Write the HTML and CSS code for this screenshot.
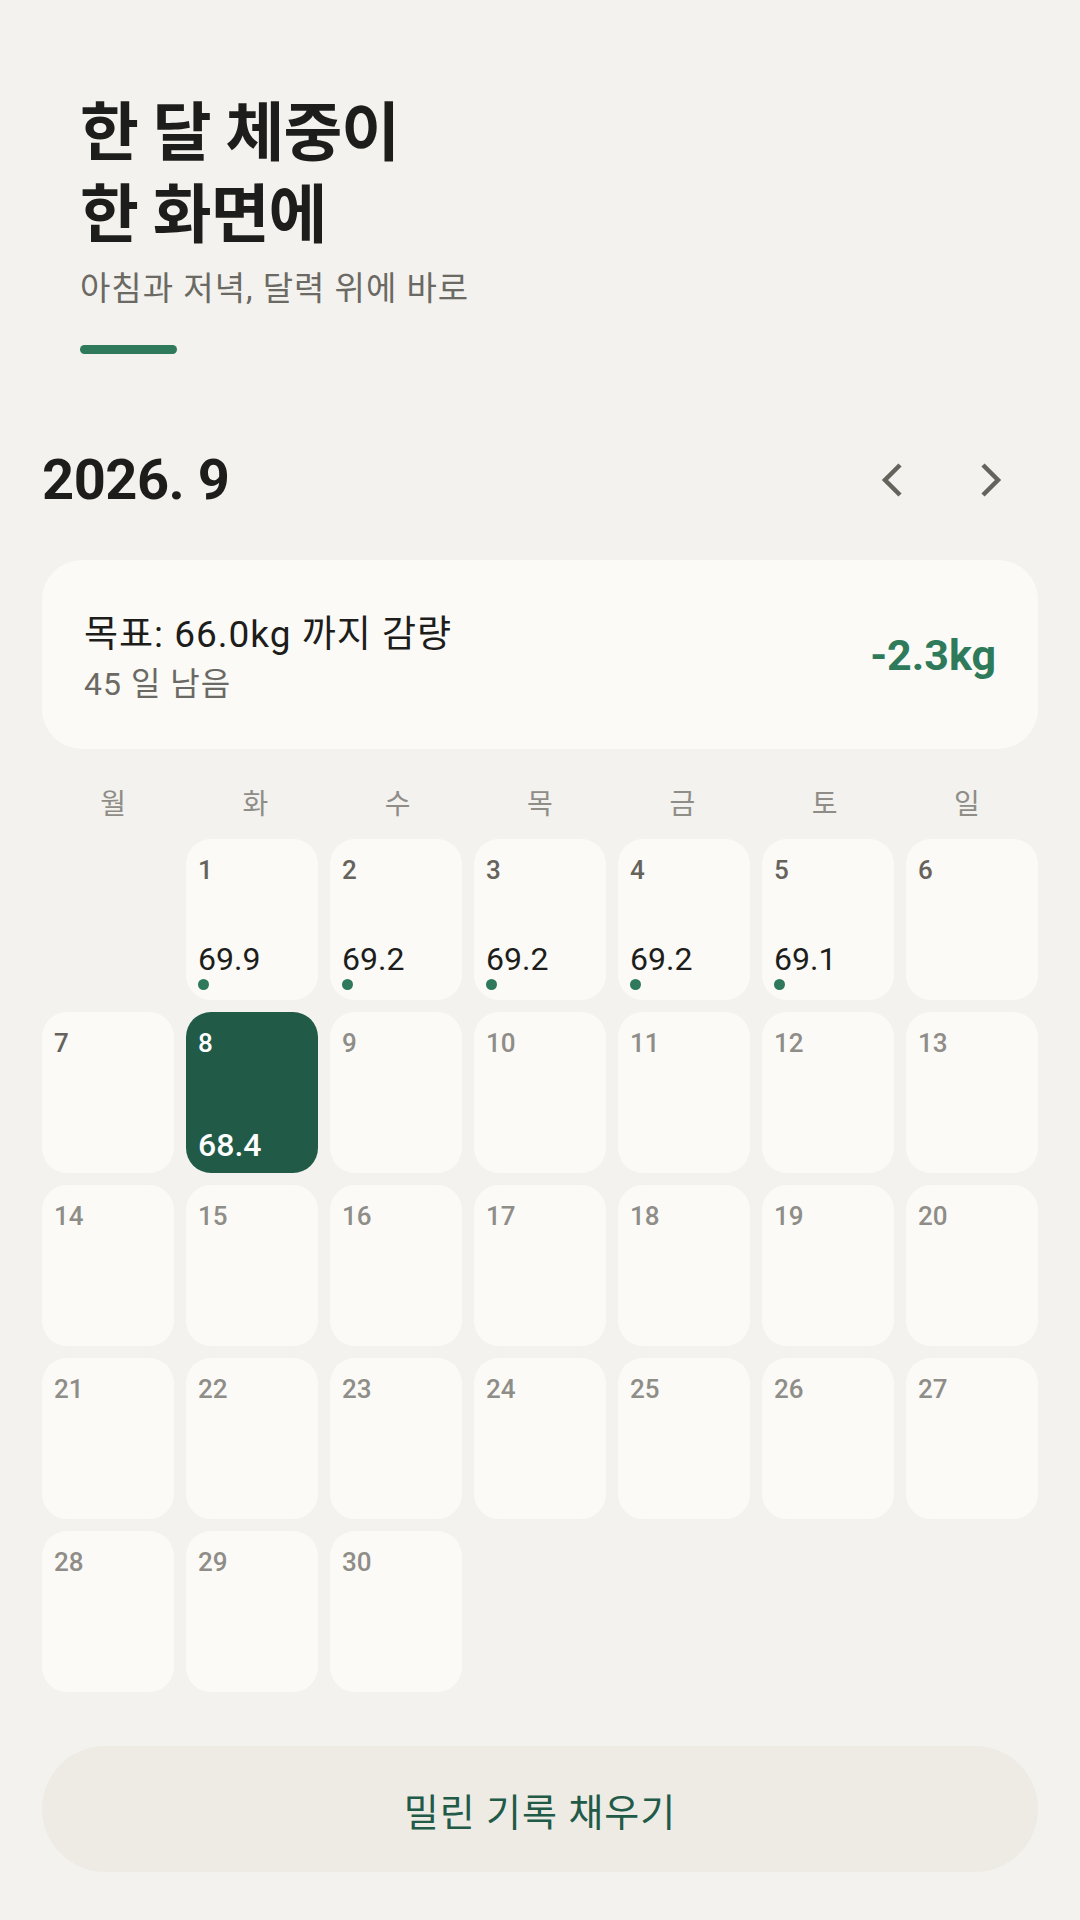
FILE: index.html
```html
<!DOCTYPE html>
<html lang="ko">
<head>
    <meta charset="UTF-8">
    <meta name="viewport" content="width=device-width, initial-scale=1.0">
    <title>한 달 체중</title>
    <link rel="stylesheet" href="styles.css">
</head>
<body>
    <div class="screen">
        <header class="intro">
            <h1>한 달 체중이<br>한 화면에</h1>
            <p class="intro-sub">아침과 저녁, 달력 위에 바로</p>
            <span class="accent-bar"></span>
        </header>

        <section class="calendar">
            <div class="month-head">
                <h2 class="month-title">2026. 9</h2>
                <div class="month-nav">
                    <button type="button" class="nav-btn" aria-label="이전 달">
                        <svg width="48" height="48" viewBox="0 0 48 48"><path d="M31 9 L16 24 L31 39"/></svg>
                    </button>
                    <button type="button" class="nav-btn" aria-label="다음 달">
                        <svg width="48" height="48" viewBox="0 0 48 48"><path d="M17 9 L32 24 L17 39"/></svg>
                    </button>
                </div>
            </div>

            <div class="goal-card">
                <div class="goal-text">
                    <p class="goal-main">목표: 66.0kg 까지 감량</p>
                    <p class="goal-left">45 일 남음</p>
                </div>
                <span class="goal-diff">-2.3kg</span>
            </div>

            <div class="weekdays">
                <span>월</span><span>화</span><span>수</span><span>목</span><span>금</span><span>토</span><span>일</span>
            </div>

            <div class="days">
                <div class="day-blank"></div>
                <div class="day past"><span class="day-num">1</span><div class="day-rec"><span class="day-val">69.9</span><i class="day-dot"></i></div></div>
                <div class="day past"><span class="day-num">2</span><div class="day-rec"><span class="day-val">69.2</span><i class="day-dot"></i></div></div>
                <div class="day past"><span class="day-num">3</span><div class="day-rec"><span class="day-val">69.2</span><i class="day-dot"></i></div></div>
                <div class="day past"><span class="day-num">4</span><div class="day-rec"><span class="day-val">69.2</span><i class="day-dot"></i></div></div>
                <div class="day past"><span class="day-num">5</span><div class="day-rec"><span class="day-val">69.1</span><i class="day-dot"></i></div></div>
                <div class="day past"><span class="day-num">6</span></div>
                <div class="day past"><span class="day-num">7</span></div>
                <div class="day today"><span class="day-num">8</span><div class="day-rec"><span class="day-val">68.4</span></div></div>
                <div class="day"><span class="day-num">9</span></div>
                <div class="day"><span class="day-num">10</span></div>
                <div class="day"><span class="day-num">11</span></div>
                <div class="day"><span class="day-num">12</span></div>
                <div class="day"><span class="day-num">13</span></div>
                <div class="day"><span class="day-num">14</span></div>
                <div class="day"><span class="day-num">15</span></div>
                <div class="day"><span class="day-num">16</span></div>
                <div class="day"><span class="day-num">17</span></div>
                <div class="day"><span class="day-num">18</span></div>
                <div class="day"><span class="day-num">19</span></div>
                <div class="day"><span class="day-num">20</span></div>
                <div class="day"><span class="day-num">21</span></div>
                <div class="day"><span class="day-num">22</span></div>
                <div class="day"><span class="day-num">23</span></div>
                <div class="day"><span class="day-num">24</span></div>
                <div class="day"><span class="day-num">25</span></div>
                <div class="day"><span class="day-num">26</span></div>
                <div class="day"><span class="day-num">27</span></div>
                <div class="day"><span class="day-num">28</span></div>
                <div class="day"><span class="day-num">29</span></div>
                <div class="day"><span class="day-num">30</span></div>
            </div>
        </section>

        <button type="button" class="fill-btn">밀린 기록 채우기</button>
    </div>
</body>
</html>
```

FILE: styles.css
```css
:root {
    --bg: #f3f2ee;
    --surface: #fbfaf7;
    --ink: #1d1d1b;
    --muted: #6b6963;
    --faint: #8f8d87;
    --green: #2e7a5b;
    --green-dark: #215a47;
    --btn-bg: #eeebe5;
}

* {
    box-sizing: border-box;
}

body {
    margin: 0;
    background-color: var(--bg);
    color: var(--ink);
    font-family: Roboto, "Noto Sans CJK KR", sans-serif;
}

p, h1, h2 {
    margin: 0;
}

.screen {
    width: 1080px;
    height: 1920px;
    padding-top: 93px;
}

/* intro */
.intro {
    padding: 0 80px;
}

.intro h1 {
    font-size: 64px;
    line-height: 82px;
    font-weight: 700;
    letter-spacing: -1px;
}

.intro-sub {
    margin-top: 12px;
    font-size: 33px;
    line-height: 40px;
    letter-spacing: 1px;
    color: var(--muted);
}

.accent-bar {
    display: block;
    width: 97px;
    height: 9px;
    margin-top: 36px;
    border-radius: 5px;
    background-color: var(--green);
}

/* calendar */
.calendar {
    padding: 0 42px;
}

.month-head {
    display: flex;
    align-items: center;
    justify-content: space-between;
    margin-top: 78px;
}

.month-title {
    font-size: 56px;
    line-height: 1;
    font-weight: 700;
    letter-spacing: -0.5px;
}

.month-nav {
    display: flex;
}

.nav-btn {
    width: 97px;
    height: 96px;
    padding: 0;
    border: none;
    background: none;
    display: flex;
    align-items: center;
    justify-content: center;
}

.nav-btn path {
    fill: none;
    stroke: #66635d;
    stroke-width: 4.5;
}

.goal-card {
    display: flex;
    align-items: center;
    justify-content: space-between;
    height: 189px;
    margin-top: 32px;
    padding: 0 42px;
    border-radius: 40px;
    background-color: var(--surface);
}

.goal-text {
    padding-top: 6px;
}

.goal-main {
    font-size: 37px;
    line-height: 46px;
    letter-spacing: 1px;
}

.goal-left {
    margin-top: 6px;
    font-size: 32px;
    line-height: 40px;
    letter-spacing: 1px;
    color: var(--muted);
}

.goal-diff {
    font-size: 43px;
    font-weight: 700;
    color: var(--green);
}

.weekdays {
    display: grid;
    grid-template-columns: repeat(7, 1fr);
    margin-top: 36px;
    font-size: 28px;
    line-height: 40px;
    text-align: center;
    color: var(--faint);
}

.days {
    display: grid;
    grid-template-columns: repeat(7, 1fr);
    grid-auto-rows: 161px;
    gap: 12px;
    margin-top: 14px;
}

.day {
    display: flex;
    flex-direction: column;
    justify-content: space-between;
    padding: 16px 12px 10px;
    border-radius: 25px;
    background-color: var(--surface);
}

.day-num {
    font-size: 26px;
    line-height: 31px;
    font-weight: 500;
    color: var(--faint);
}

.day.past .day-num {
    color: #66635d;
}

.day-rec {
    display: flex;
    flex-direction: column;
    align-items: flex-start;
}

.day-val {
    font-size: 32px;
    line-height: 32px;
    color: var(--ink);
}

.day-dot {
    width: 11px;
    height: 11px;
    margin-top: 4px;
    border-radius: 50%;
    background-color: var(--green);
}

.day.today {
    background-color: var(--green-dark);
    padding-bottom: 12px;
}

.day.today .day-num,
.day.today .day-val {
    color: #fff;
}

.day.today .day-val {
    font-weight: 500;
}

.fill-btn {
    display: block;
    width: 996px;
    height: 126px;
    margin: 54px 42px 0;
    border: none;
    border-radius: 63px;
    background-color: var(--btn-bg);
    color: var(--green-dark);
    font-family: Roboto, "Noto Sans CJK KR", sans-serif;
    font-size: 38px;
    letter-spacing: 1px;
}
```
